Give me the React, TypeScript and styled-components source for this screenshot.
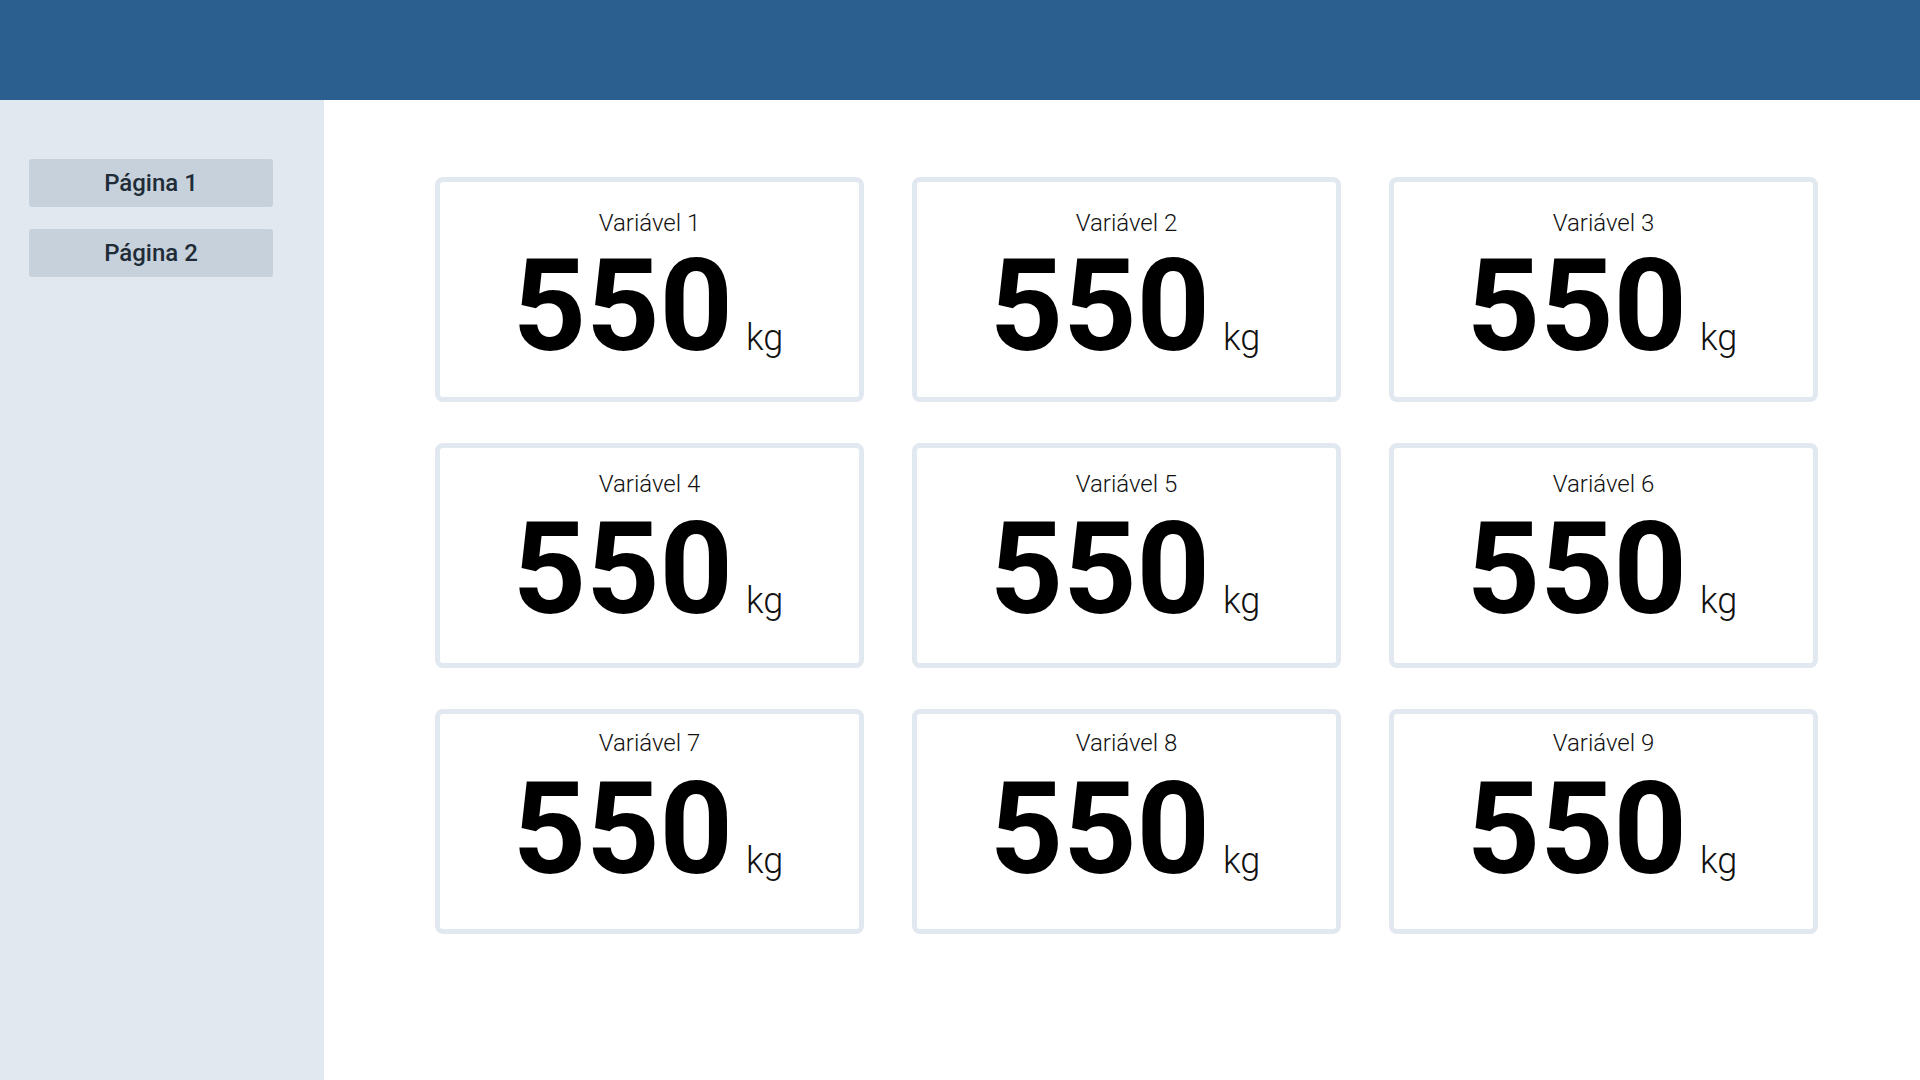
import React from "react";
import styled, { createGlobalStyle } from "styled-components";

const GlobalStyle = createGlobalStyle`
  * { box-sizing: border-box; }
  html, body { margin: 0; padding: 0; height: 100%; }
  body { font-family: Roboto, "Liberation Sans", sans-serif; background: #ffffff; }
  #root { height: 100%; }
`;

const Page = styled.div`
  display: grid;
  grid-template-rows: 100px 1fr;
  height: 1080px;
  width: 1920px;
  overflow: hidden;
`;

const Header = styled.header`
  background: #2b5f8f;
`;

const Body = styled.div`
  display: grid;
  grid-template-columns: 324px 1fr;
  min-height: 0;
`;

const Sidebar = styled.nav`
  background: #e2e8f0;
  display: flex;
  flex-direction: column;
  gap: 22px;
  padding: 59px 51px 0 29px;
`;

const NavButton = styled.button`
  height: 48px;
  width: 244px;
  border: none;
  border-radius: 3px;
  background: #c6d1db;
  color: #1f2c38;
  font-family: Roboto, "Liberation Sans", sans-serif;
  font-weight: 500;
  font-size: 24px;
  cursor: pointer;
  padding: 0;
`;

const Main = styled.main`
  padding: 77px 0 0 111px;
`;

const Grid = styled.div`
  display: grid;
  grid-template-columns: repeat(3, 429px);
  column-gap: 48px;
  row-gap: 41px;
`;

const Card = styled.div<{ $padTop: number }>`
  border: 5px solid #e2e8f0;
  border-radius: 8px;
  height: 225px;
  padding-top: ${(p) => p.$padTop}px;
  display: flex;
  flex-direction: column;
  align-items: center;
`;

const Label = styled.div`
  font-family: Roboto, "Liberation Sans", sans-serif;
  font-weight: 300;
  font-size: 24px;
  line-height: 28px;
  color: #111111;
`;

const ValueRow = styled.div<{ $gap: number }>`
  display: flex;
  align-items: baseline;
  margin-top: ${(p) => p.$gap}px;
  margin-left: -3px;
`;

const Value = styled.span`
  font-family: Roboto, "Liberation Sans", sans-serif;
  font-weight: 700;
  font-size: 128px;
  line-height: 128px;
  color: #000000;
`;

const Unit = styled.span`
  font-family: Roboto, "Liberation Sans", sans-serif;
  font-weight: 300;
  font-size: 36px;
  line-height: 36px;
  color: #111111;
  margin-left: 13px;
`;

const rowSpacing = [
  { pad: 27, gap: 5 },
  { pad: 22, gap: 7 },
  { pad: 15, gap: 8 },
];

const items = Array.from({ length: 9 }, (_, i) => ({
  label: `Variável ${i + 1}`,
  value: 550,
  unit: "kg",
  row: Math.floor(i / 3),
}));

export default function App() {
  return (
    <>
      <GlobalStyle />
      <Page>
        <Header />
        <Body>
          <Sidebar>
            <NavButton>Página 1</NavButton>
            <NavButton>Página 2</NavButton>
          </Sidebar>
          <Main>
            <Grid>
              {items.map((it) => (
                <Card key={it.label} $padTop={rowSpacing[it.row].pad}>
                  <Label>{it.label}</Label>
                  <ValueRow $gap={rowSpacing[it.row].gap}>
                    <Value>{it.value}</Value>
                    <Unit>{it.unit}</Unit>
                  </ValueRow>
                </Card>
              ))}
            </Grid>
          </Main>
        </Body>
      </Page>
    </>
  );
}
